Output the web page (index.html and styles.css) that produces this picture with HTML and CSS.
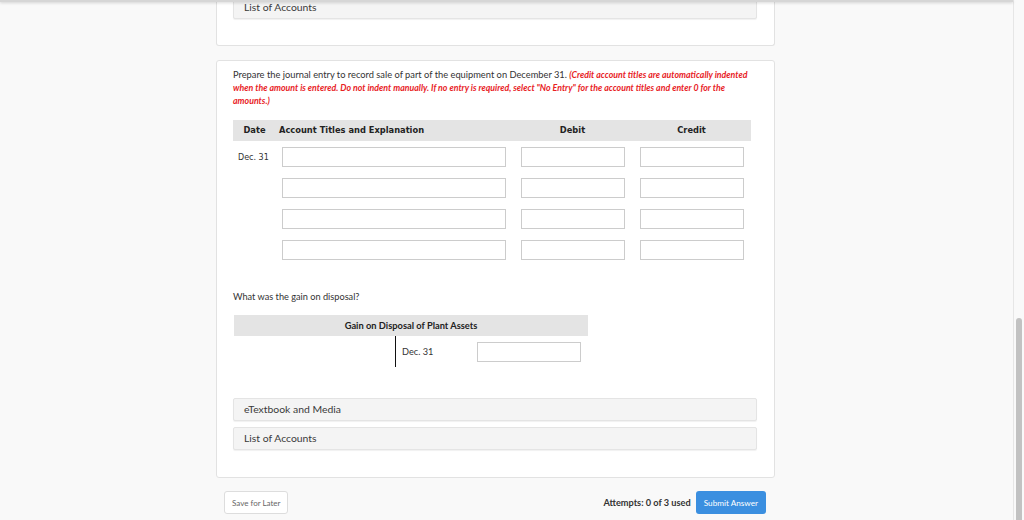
FILE: index.html
```html
<!DOCTYPE html>
<html>
  <head>
    <meta name="viewport" content="width=device-width, initial-scale=1">
    <link rel="stylesheet" href="styles.css">
  </head>

  <body>
    <div class="topshadow"></div>

    <div class="page">
      <div class="card card-top">
        <div class="resource">List of Accounts</div>
      </div>

      <div class="card card-question">
        <p class="prompt">
          Prepare the journal entry to record sale of part of the equipment on December 31.
          <em class="hint">(Credit account titles are automatically indented when the amount is entered. Do not indent manually. If no entry is required, select "No Entry" for the account titles and enter 0 for the amounts.)</em>
        </p>

        <div class="journal">
          <div class="jhead">Date</div>
          <div class="jhead jhead-acct">Account Titles and Explanation</div>
          <div class="jhead">Debit</div>
          <div class="jhead">Credit</div>

          <div class="jdate">Dec. 31</div>
          <div class="jcell jcell-acct"><input type="text" class="box"></div>
          <div class="jcell"><input type="text" class="box"></div>
          <div class="jcell"><input type="text" class="box"></div>

          <div class="jdate"></div>
          <div class="jcell jcell-acct"><input type="text" class="box"></div>
          <div class="jcell"><input type="text" class="box"></div>
          <div class="jcell"><input type="text" class="box"></div>

          <div class="jdate"></div>
          <div class="jcell jcell-acct"><input type="text" class="box"></div>
          <div class="jcell"><input type="text" class="box"></div>
          <div class="jcell"><input type="text" class="box"></div>

          <div class="jdate"></div>
          <div class="jcell jcell-acct"><input type="text" class="box"></div>
          <div class="jcell"><input type="text" class="box"></div>
          <div class="jcell"><input type="text" class="box"></div>
        </div>

        <p class="question">What was the gain on disposal?</p>

        <div class="taccount">
          <div class="thead">Gain on Disposal of Plant Assets</div>
          <div class="tbody">
            <div class="tside tside-left"></div>
            <div class="tside tside-right">
              <span class="tdate">Dec. 31</span>
              <input type="text" class="box tbox">
            </div>
          </div>
        </div>

        <div class="resources">
          <div class="resource">eTextbook and Media</div>
          <div class="resource">List of Accounts</div>
        </div>
      </div>

      <div class="footer">
        <button class="btn-save">Save for Later</button>
        <div class="footer-right">
          <span class="attempts">Attempts: 0 of 3 used</span>
          <button class="btn-submit">Submit Answer</button>
        </div>
      </div>
    </div>

    <div class="scrollbar"><div class="thumb"></div></div>
  </body>
</html>
```

FILE: styles.css
```css
/* page */
body {
margin: 0;
background: #f9f9f9;
font-family: Lato, "Open Sans", sans-serif;
color: #333;
overflow: hidden;
}

.topshadow {
position: fixed;
top: 0;
left: 0;
width: 1013px;
height: 2px;
background: #d6d6d6;
box-shadow: 0 1px 3px rgba(0,0,0,0.18);
z-index: 5;
}

.scrollbar {
position: fixed;
top: 0;
right: 0;
width: 10px;
height: 520px;
border-left: 1px solid #e6e6e6;
background: #f9f9f9;
}

.scrollbar .thumb {
position: absolute;
top: 318px;
left: 2px;
width: 6px;
height: 210px;
border-radius: 3px;
background: #c2c2c2;
}

.page {
width: 559px;
margin-left: 216px;
}

/* Cards */
.card {
background: #fff;
border: 1px solid #e2e2e2;
border-radius: 3px;
}

.card-top {
margin-top: -4px;
padding: 0 17px 26px 16px;
border-top: none;
}

.card-question {
margin-top: 14px;
padding: 7px 17px 27px 16px;
}

.resource {
height: 21px;
line-height: 21px;
padding-left: 10px;
background: #f4f4f4;
border: 1px solid #e4e4e4;
border-radius: 2px;
box-shadow: 0 1px 1px rgba(0,0,0,0.06);
font-size: 10.4px;
color: #3a3a3a;
}

.resources .resource + .resource {
margin-top: 6px;
}

/* Question text */
.prompt {
margin: 0;
font-size: 9.3px;
line-height: 13px;
color: #333;
}

.hint {
color: #e8221f;
font-weight: bold;
font-size: 8.8px;
}

/* Journal entry table */
.journal {
margin-top: 13px;
width: 518px;
display: grid;
grid-template-columns: 43px 237px 119px 119px;
grid-auto-rows: 31px;
font-family: Tahoma, "DejaVu Sans", Verdana, sans-serif;
}

.journal .jhead {
height: 21px;
line-height: 21px;
background: #e4e4e4;
font-size: 8.3px;
font-weight: bold;
color: #222;
text-align: center;
}

.journal .jhead-acct {
text-align: left;
padding-left: 3px;
}

.jdate {
font-size: 8px;
color: #333;
padding: 12px 0 0 5px;
}

.jcell {
padding: 6px 7px 0 8px;
}

.jcell-acct {
padding-left: 6px;
}

.box {
display: block;
box-sizing: border-box;
width: 100%;
height: 20px;
margin: 0;
border: 1px solid #ccc;
border-radius: 0;
background: #fff;
}

/* journal rows sit 6px below header */
.journal .jhead + .jhead + .jhead + .jhead ~ .jdate,
.journal .jhead + .jhead + .jhead + .jhead ~ .jcell {
margin-top: -10px;
}

.question {
margin: 16px 0 0;
font-size: 9.2px;
color: #333;
}

/* T account */
.taccount {
margin-top: 13px;
width: 354px;
margin-left: 1px;
}

.thead {
height: 21px;
line-height: 21px;
background: #e4e4e4;
text-align: center;
font-size: 9.3px;
font-weight: bold;
color: #222;
}

.tbody {
display: flex;
}

.tside-left {
width: 161px;
height: 31px;
border-right: 1px solid #111;
}

.tside-right {
flex: 1;
display: flex;
align-items: center;
padding: 0 0 0 6px;
height: 31px;
}

.tdate {
width: 75px;
font-size: 9.2px;
color: #333;
}

.tbox {
width: 104px;
margin-left: 0;
}

.resources {
margin-top: 31px;
}

/* Footer */
.footer {
display: flex;
justify-content: space-between;
align-items: center;
padding: 13px 9px 0 8px;
}

.btn-save {
height: 23px;
padding: 0 7px;
background: #fff;
border: 1px solid #ddd;
border-radius: 3px;
font-family: Lato, sans-serif;
font-size: 8px;
color: #666;
}

.footer-right {
display: flex;
align-items: center;
}

.attempts {
font-size: 9.2px;
font-weight: bold;
color: #333;
margin-right: 5px;
}

.btn-submit {
height: 23px;
padding: 0 8px;
background: #3b8fe0;
border: none;
border-radius: 3px;
font-family: Lato, sans-serif;
font-size: 8.2px;
color: #fff;
}
```
